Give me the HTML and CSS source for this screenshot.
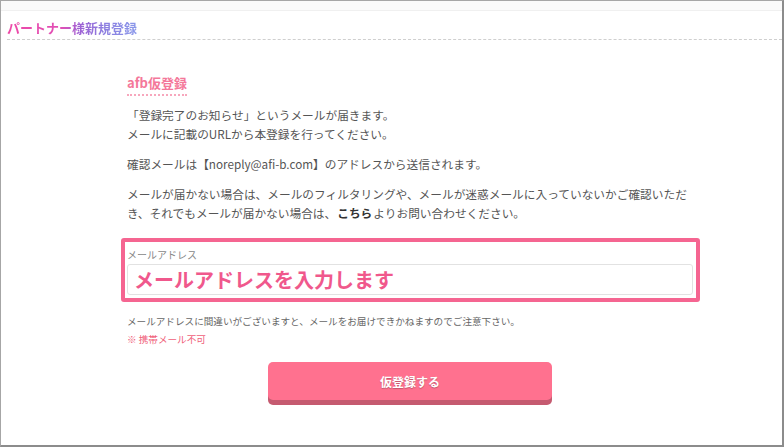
FILE: index.html
```html
<!DOCTYPE html>
<html lang="ja">
<head>
  <meta charset="UTF-8" />
  <meta name="viewport" content="width=device-width, initial-scale=1.0"/>
  <title>パートナー様新規登録</title>
  <link rel="stylesheet" href="styles.css">
</head>
<body>

  <div class="frame">
    <div class="topbar"></div>
    <h1 class="page-title"><span>パートナー様新規登録</span></h1>

    <div class="content">
      <h2 class="section-title">afb仮登録</h2>

      <p class="text">「登録完了のお知らせ」というメールが届きます。<br>メールに記載のURLから本登録を行ってください。</p>
      <p class="text">確認メールは【noreply@afi-b.com】のアドレスから送信されます。</p>
      <p class="text">メールが届かない場合は、メールのフィルタリングや、メールが迷惑メールに入っていないかご確認いただき、それでもメールが届かない場合は、<a class="link" href="#">こちら</a>よりお問い合わせください。</p>

      <div class="field">
        <label class="field-label" for="mail">メールアドレス</label>
        <input class="field-input" id="mail" type="text" placeholder="メールアドレスを入力します">
      </div>

      <p class="note">メールアドレスに間違いがございますと、メールをお届けできかねますのでご注意下さい。</p>
      <p class="note warn">※ 携帯メール不可</p>

      <div class="actions">
        <button class="submit-btn">仮登録する</button>
      </div>
    </div>
  </div>

</body>
</html>
```

FILE: styles.css
```css
html, body {
  margin: 0;
  padding: 0;
}
body {
  font-family: "Noto Sans CJK JP", "Noto Sans", sans-serif;
  background: #fff;
  color: #555;
}
.frame {
  box-sizing: border-box;
  width: 784px;
  height: 447px;
  border: 1px solid #a6a6a6;
  border-right: 2px solid #8c8c8c;
  border-bottom: 2px solid #8c8c8c;
  overflow: hidden;
}
.topbar {
  height: 9px;
  background: #fafafa;
  border-bottom: 1px solid #f0f0f0;
}
.page-title {
  margin: 7px 0 0 6px;
  padding-bottom: 1px;
  border-bottom: 1px dashed #cfcfcf;
  font-size: 13px;
  line-height: 20px;
  font-weight: bold;
}
.page-title span {
  background: linear-gradient(90deg, #ee48a6 0%, #e04fb6 42%, #a060d4 55%, #8c7ee0 75%, #8a98ea 100%);
  -webkit-background-clip: text;
  background-clip: text;
  color: transparent;
}
.content {
  width: 566px;
  margin-left: 126px;
}
.section-title {
  display: inline-block;
  margin: 34px 0 0 0;
  padding-bottom: 2px;
  border-bottom: 2px dotted #f7a7bd;
  font-size: 13px;
  line-height: 18px;
  font-weight: bold;
  color: #f4789a;
}
.text {
  margin: 9px 0 0 0;
  font-size: 11.7px;
  line-height: 19px;
  color: #555;
}
.text + .text {
  margin-top: 11px;
}
.link {
  display: inline-block;
  margin: 0 1px;
  color: #333;
  font-weight: bold;
  text-decoration: none;
}
.field {
  margin: 16px -7px 0 -6px;
  padding: 6px 3px 3px 2px;
  border: 4px solid #f56591;
  border-radius: 3px;
}
.field-label {
  display: block;
  font-size: 10px;
  line-height: 14px;
  color: #888;
}
.field-input {
  display: block;
  box-sizing: border-box;
  width: 100%;
  height: 31px;
  margin-top: 2px;
  padding: 0 6px;
  border: 1px solid #e2e2e2;
  border-radius: 3px;
  font-family: "Noto Sans CJK JP", sans-serif;
  font-size: 20px;
  font-weight: bold;
  color: #333;
}
.field-input::placeholder {
  color: #f0588c;
  opacity: 1;
}
.note {
  margin: 12px 0 0 0;
  font-size: 9.6px;
  line-height: 14px;
  color: #666;
}
.note.warn {
  margin-top: 4px;
  color: #f0607a;
}
.actions {
  display: flex;
  justify-content: center;
  margin-top: 16px;
}
.submit-btn {
  width: 284px;
  height: 38px;
  border: none;
  border-radius: 5px;
  background-color: #ff718f;
  box-shadow: 0 5px 0 #c55a70;
  color: #fff;
  font-family: "Noto Sans CJK JP", sans-serif;
  font-size: 12px;
  font-weight: bold;
  text-shadow: 0 1px 1px rgba(0, 0, 0, 0.25);
  cursor: pointer;
}
```
